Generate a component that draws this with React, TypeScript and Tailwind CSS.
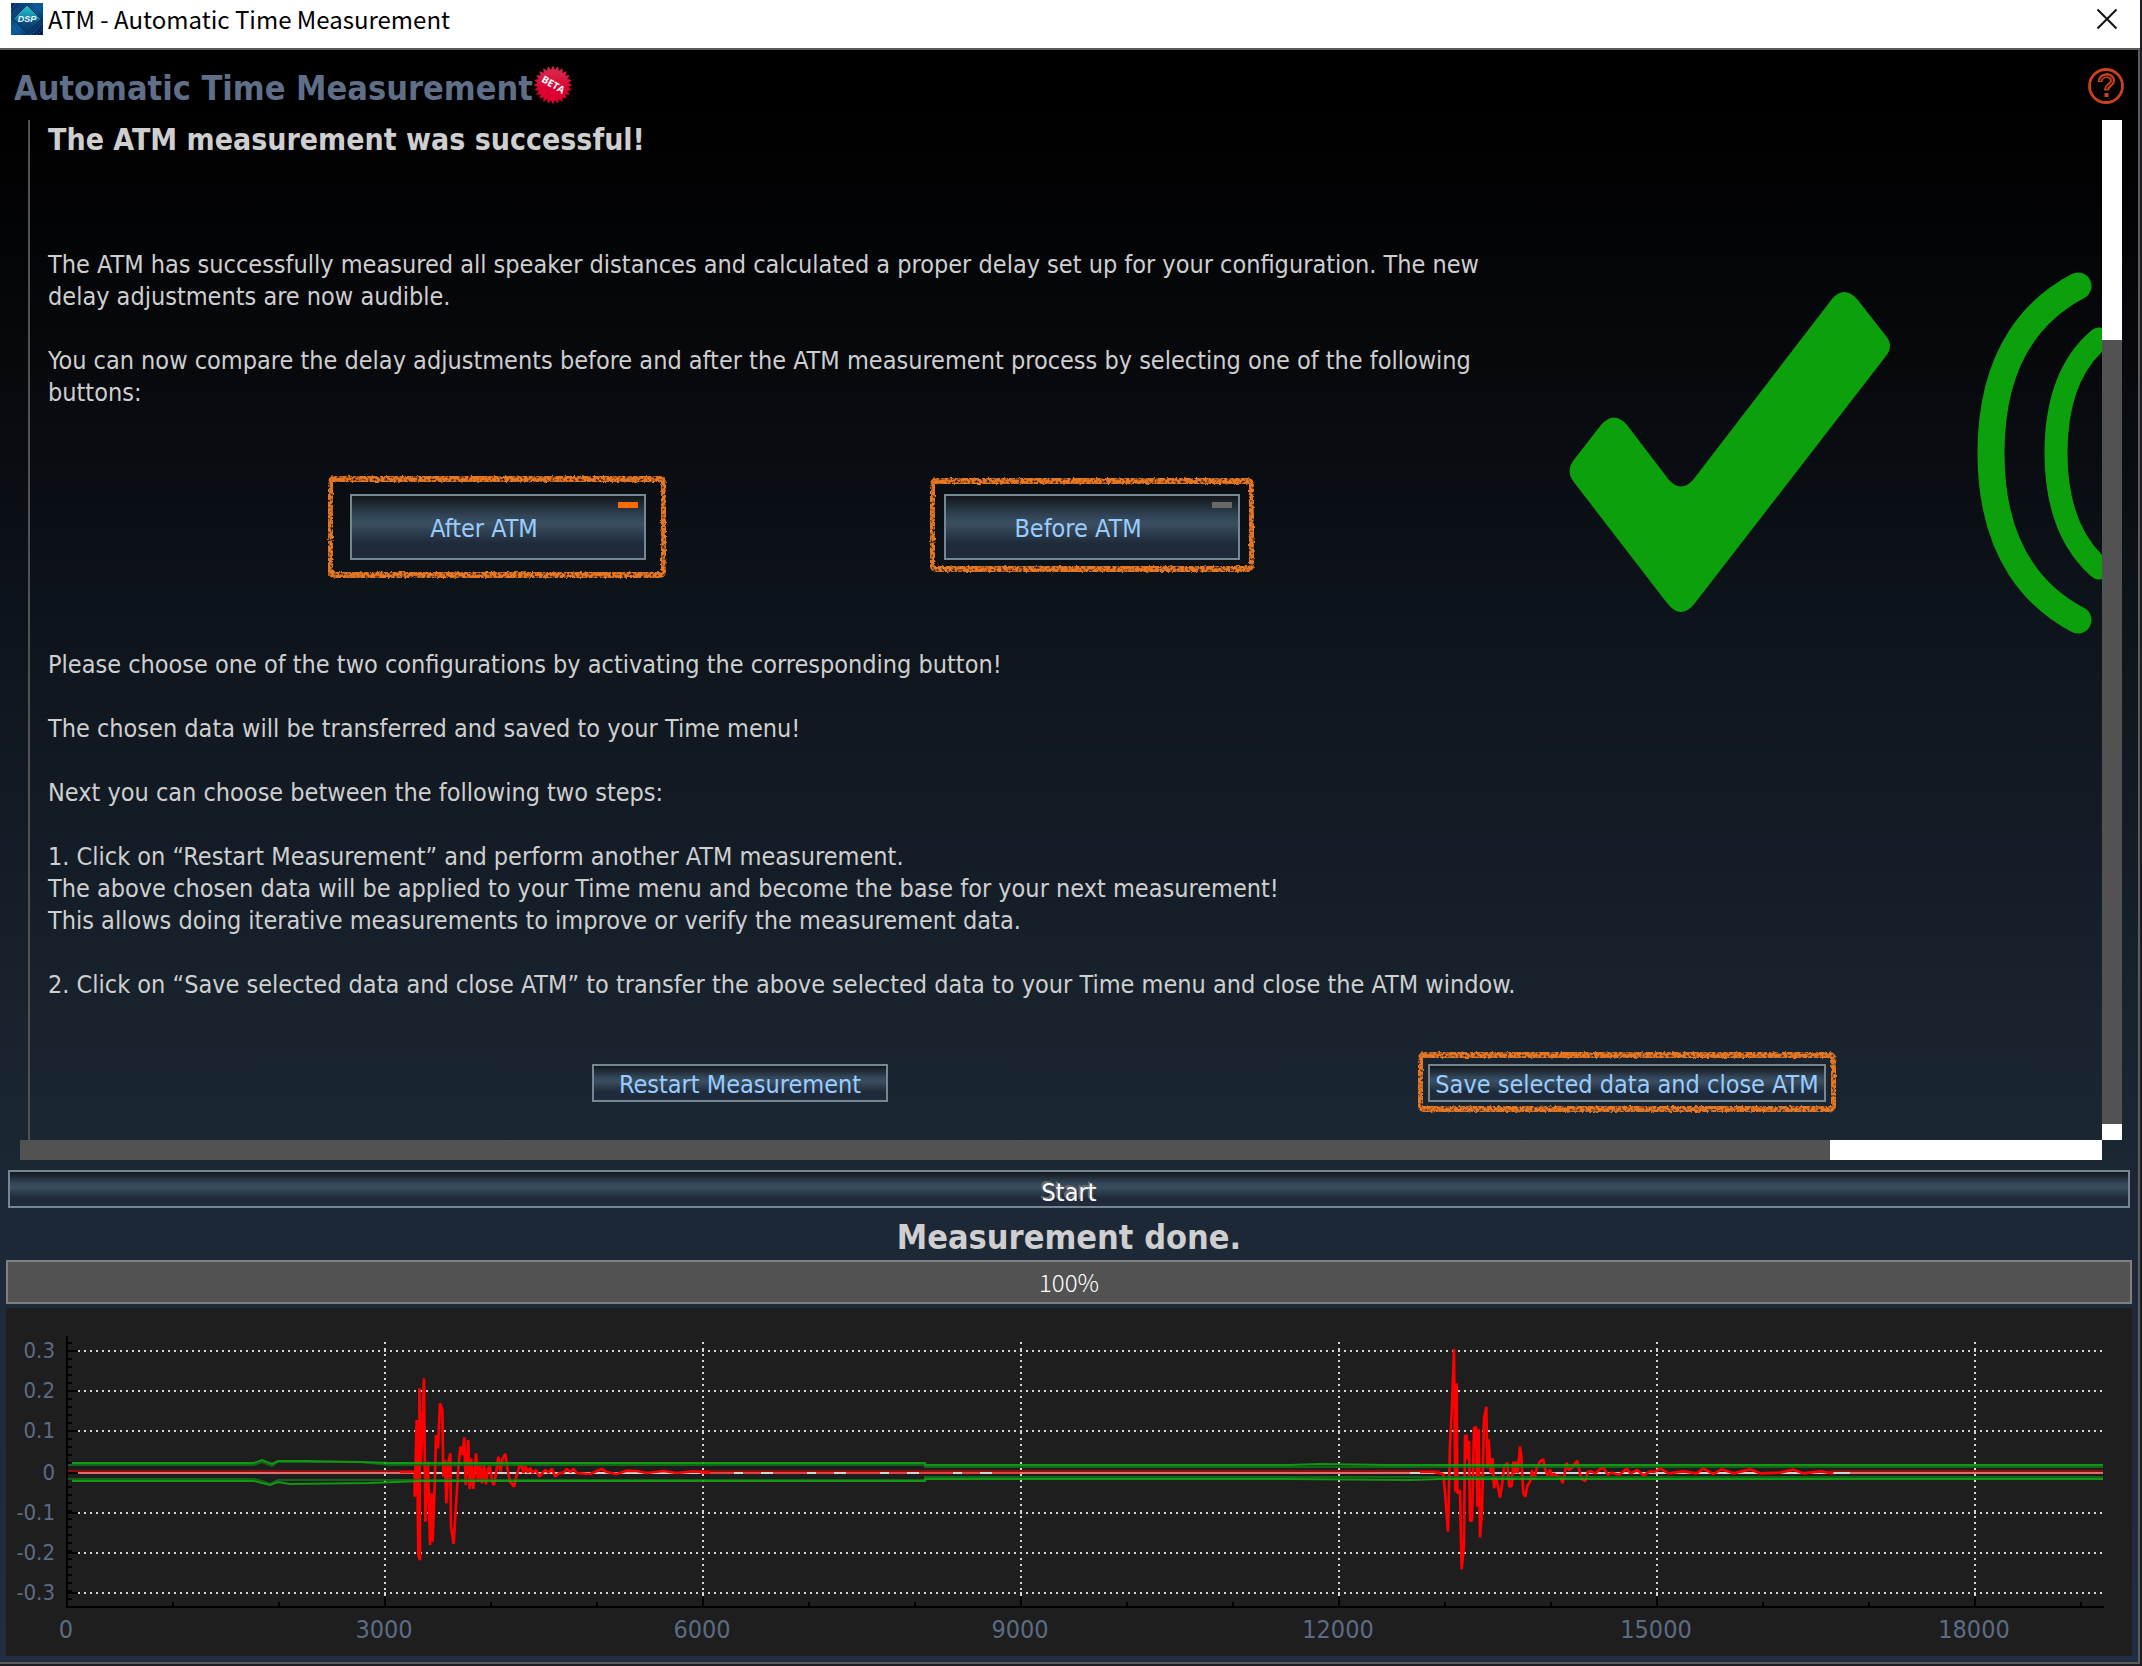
import type { ReactNode } from "react";

const FIRST_IMPULSE =
  "0,396 44,396 44,470 50,240 55,645 60,660 58,145 62,370 66,300 72,115 76,545 84,365 90,615 95,460 98,605 104,440 108,285 114,325 120,190 127,210 130,410 135,360 139,490 145,370 151,340 153,560 161,612 168,495 175,385 181,320 187,345 193,292 197,435 205,300 209,447 213,355 220,447 228,340 234,425 240,375 246,430 252,376 258,433 264,385 270,380 276,425 282,435 288,400 295,350 302,395 308,355 316,342 322,385 330,425 342,440 350,405 358,380 364,372 370,400 376,378 384,398 390,384 398,399 408,390 418,410 428,398 436,390 446,398 456,386 466,410 476,400 490,398 500,387 512,396 520,386 530,399 570,402 605,387 620,396 650,402 680,392 710,393 740,399 790,393 830,399 880,394 930,398";

const SECOND_IMPULSE =
  "0,426 40,426 70,432 76,500 84,605 90,345 96,225 102,57 106,485 110,160 112,490 120,480 125,718 132,645 135,320 140,315 143,388 147,332 150,572 156,572 162,295 168,290 172,530 176,298 180,622 186,545 192,265 199,230 202,415 206,328 212,430 218,385 222,475 228,440 233,465 240,503 246,465 252,412 262,398 268,470 275,468 280,395 284,430 288,395 293,430 300,350 304,380 310,490 316,500 322,468 330,455 336,420 342,450 350,415 360,395 370,388 376,420 384,438 390,418 396,440 402,430 412,440 420,440 428,460 434,430 440,398 446,420 455,415 465,400 472,393 480,430 486,448 496,453 504,425 515,424 525,430 548,412 556,422 564,434 575,428 598,434 620,416 632,430 652,420 670,436 690,424 702,426 722,416 745,430 790,424 830,430 850,416 880,432 905,418 940,430 990,418 1020,430 1080,428 1120,419 1150,430 1200,424 1240,430";

const X_TICKS = [0, 3000, 6000, 9000, 12000, 15000, 18000];
const Y_TICKS = [
  { label: "0.3", y: 1351 },
  { label: "0.2", y: 1391 },
  { label: "0.1", y: 1431 },
  { label: "0", y: 1473 },
  { label: "-0.1", y: 1513 },
  { label: "-0.2", y: 1553 },
  { label: "-0.3", y: 1593 },
];

const toX = (sample: number) => 67 + (sample * 318) / 3000;

function ImpulseChart() {
  return (
    <svg viewBox="6 1308 2126 348" className="block h-auto w-full bg-[#1e1e1e]" role="img" aria-label="Impulse response">
      {/* grid */}
      <g stroke="#d4d4d4" strokeWidth="2" shapeRendering="crispEdges">
        {Y_TICKS.filter((t) => t.label !== "0").map((t) => (
          <line key={t.label} x1="78" x2="2103" y1={t.y} y2={t.y} strokeDasharray="2 4" />
        ))}
        {X_TICKS.slice(1).map((v) => (
          <line key={v} x1={toX(v)} x2={toX(v)} y1="1342" y2="1596" strokeDasharray="2 4" />
        ))}
        <line x1="78" x2="2103" y1="1473" y2="1473" />
      </g>

      {/* axes and ticks */}
      <g stroke="#000" strokeWidth="2" shapeRendering="crispEdges">
        <line x1="67" x2="67" y1="1336" y2="1608" />
        <line x1="66" x2="2104" y1="1607" y2="1607" />
        {Y_TICKS.map((t) => (
          <line key={t.label} x1="67" x2="78" y1={t.y} y2={t.y} />
        ))}
        {Array.from({ length: 33 }, (_, i) => (
          <line key={i} x1="67" x2="72" y1={1343 + i * 8} y2={1343 + i * 8} />
        ))}
        {X_TICKS.slice(1).map((v) => (
          <line key={v} x1={toX(v)} x2={toX(v)} y1="1596" y2="1607" />
        ))}
        {Array.from({ length: 19 }, (_, i) => (
          <line key={i} x1={toX((i + 1) * 1000)} x2={toX((i + 1) * 1000)} y1="1602" y2="1607" />
        ))}
      </g>

      {/* quiet parts of the signal */}
      <g strokeWidth="2" shapeRendering="crispEdges">
        <path d="M68 1471H412M700 1471H1440M1830 1471H2103" stroke="#8a1010" />
        <path d="M78 1473H412M1020 1473H1410M1850 1473H2103" stroke="#e26c6c" />
        <path d="M700 1473H1020" stroke="#e04040" strokeDasharray="34 9 18 12" />
      </g>

      {/* impulses */}
      <g fill="none" stroke="#ff0000" strokeWidth="8" strokeLinejoin="bevel">
        <polyline points={FIRST_IMPULSE} transform="translate(400 1340) scale(0.33333)" />
        <polyline points={SECOND_IMPULSE} transform="translate(1420 1330) scale(0.33333)" />
      </g>

      {/* tolerance band */}
      <g fill="none" opacity="0.85">
        <path d="M68 1465H254L262 1462L272 1466L278 1462H360L390 1465H925V1467H2103" stroke="#14701a" strokeWidth="2" />
        <path d="M68 1479H254L262 1481L270 1484L278 1480H925V1477H2103" stroke="#14701a" strokeWidth="2" />
        <path d="M72 1463H254L262 1460L272 1464L278 1461L305 1461L360 1462L390 1463H925V1465H1290L1320 1464L1385 1465H2103" stroke="#0eae0e" strokeWidth="2" />
        <path d="M72 1481H254L262 1483L270 1485L278 1482L290 1484L370 1483L420 1481H925V1479H1290L1410 1480L1440 1479H2103" stroke="#0eae0e" strokeWidth="2" />
      </g>

      {/* axis labels */}
      <g fill="#5c6c83" fontFamily='"DejaVu Sans Condensed", "DejaVu Sans", sans-serif'>
        {Y_TICKS.map((t) => (
          <text key={t.label} x="55" y={t.y + 7} fontSize="22" textAnchor="end">
            {t.label}
          </text>
        ))}
        {X_TICKS.map((v) => (
          <text key={v} x={toX(v) - 1} y="1638" fontSize="25" textAnchor="middle">
            {v}
          </text>
        ))}
      </g>
    </svg>
  );
}

function DspIcon() {
  return (
    <svg viewBox="0 0 32 32" className="size-8" aria-hidden="true">
      <defs>
        <linearGradient id="dspBack" x1="0" y1="0" x2="1" y2="1">
          <stop offset="0" stopColor="#0a2a63" />
          <stop offset=".5" stopColor="#0b5c9a" />
          <stop offset="1" stopColor="#06173f" />
        </linearGradient>
        <linearGradient id="dspGem" x1="0" y1="0" x2="0" y2="1">
          <stop offset="0" stopColor="#27c3cf" />
          <stop offset=".45" stopColor="#1588a8" />
          <stop offset=".6" stopColor="#0b4f7c" />
          <stop offset="1" stopColor="#0a3565" />
        </linearGradient>
      </defs>
      <rect width="32" height="32" fill="url(#dspBack)" />
      <path d="M0 6L6 0M0 12L12 0M20 32L32 20M26 32L32 26M0 22L10 32M22 0L32 10" stroke="#1f7fc4" strokeDasharray="1 2" />
      <path d="M16 2L30 16L16 30L2 16Z" fill="url(#dspGem)" stroke="#0a2f55" strokeWidth="1" />
      <text x="16" y="19" fontSize="9" fontWeight="bold" fontStyle="italic" textAnchor="middle" fill="#e8f6ff" fontFamily='"Liberation Sans", sans-serif'>
        DSP
      </text>
    </svg>
  );
}

function BetaBadge() {
  const spikes = 24;
  const points = Array.from({ length: spikes * 2 }, (_, i) => {
    const r = i % 2 ? 15.5 : 19.5;
    const a = (i * Math.PI) / spikes;
    return `${20 + r * Math.sin(a)},${20 - r * Math.cos(a)}`;
  }).join(" ");
  return (
    <svg viewBox="0 0 40 40" className="size-10" role="img" aria-label="Beta">
      <defs>
        <linearGradient id="betaFill" x1="0" y1="0" x2="0" y2="1">
          <stop offset=".2" stopColor="#d92348" />
          <stop offset=".6" stopColor="#dc0030" />
        </linearGradient>
      </defs>
      <polygon points={points} fill="url(#betaFill)" />
      <text x="20" y="23" fontSize="10" fontWeight="bold" textAnchor="middle" fill="#fff" transform="rotate(30 20 20)" fontFamily='"Open Sans", sans-serif'>
        BETA
      </text>
    </svg>
  );
}

function HelpIcon() {
  return (
    <svg viewBox="0 0 36 36" className="size-9" aria-hidden="true" fill="none">
      <circle cx="18" cy="18" r="16.5" stroke="#c9421f" strokeWidth="2.8" />
      <path d="M12 14C12 5.500 24.500 6 24.500 12.500C24.500 17 18.500 17 18.500 22.500" stroke="#c9421f" strokeWidth="5" />
      <path d="M12 13C13.500 6.500 24.500 6.500 24.500 12.500C24.500 17 18.500 17 18.500 21" stroke="#3a1006" strokeWidth="1.200" />
      <rect x="16.500" y="25" width="4" height="4" fill="#c9421f" />
    </svg>
  );
}

function SuccessDrawing() {
  return (
    <svg viewBox="1562 265 540 375" className="mt-4 w-[540px] shrink-0 self-start" role="img" aria-label="Measurement successful">
      <path
        fill="#0ca00c"
        d="M1832 299Q1844 285 1857 299L1886 336Q1894 346 1886 356L1695 603Q1681 621 1667 603L1573 481Q1566 471 1573 461L1601 425Q1614 410 1627 425L1669 480Q1681 493 1693 480Z"
      />
      <g fill="none" stroke="#0ca00c" strokeLinecap="round">
        <path strokeWidth="27" d="M2078 286C2040 306 1991 350 1991 453S2040 600 2078 620" />
        <path strokeWidth="23" d="M2099 339C2072 362 2056 400 2056 453S2072 544 2099 568" />
      </g>
    </svg>
  );
}

/* Hand-drawn orange outline that surrounds a control */
function Marker({ className }: { className: string }) {
  return (
    <span
      aria-hidden="true"
      className={`pointer-events-none absolute rounded-md border-x-[5px] border-y-[6px] border-[#e87722] [filter:url(#chalk)] ${className}`}
    />
  );
}

const BUTTON =
  "flex items-center justify-center whitespace-nowrap border-2 border-[#758790] bg-[linear-gradient(180deg,#13171b_0%,#33475a_34%,#3a4e60_45%,#1f2b3b_76%,#1f2b3b_100%)] text-[25px] leading-8";

function ToggleButton({ children, active, marker }: { children: ReactNode; active: boolean; marker: string }) {
  return (
    <div className="relative">
      <button type="button" aria-pressed={active} className={`${BUTTON} relative h-[66px] w-[296px] pt-1 pr-7 text-[#99ccff]`}>
        {children}
        <span className={`absolute top-[6px] right-[6px] h-[6px] w-5 ${active ? "bg-[#ff6a00]" : "bg-[#686868]"}`} />
      </button>
      <Marker className={marker} />
    </div>
  );
}

export default function App() {
  return (
    <div className="flex min-h-screen flex-col bg-[#1d1c22] pr-[2px] pb-[2px] font-['DejaVu_Sans_Condensed','DejaVu_Sans',sans-serif] text-[#cfcfcf]">
      <svg width="0" height="0" className="absolute" aria-hidden="true">
        <filter id="chalk" x="-5%" y="-10%" width="110%" height="120%">
          <feTurbulence type="fractalNoise" baseFrequency="0.35" numOctaves="2" seed="4" result="noise" />
          <feDisplacementMap in="SourceGraphic" in2="noise" scale="3" xChannelSelector="R" yChannelSelector="G" result="rough" />
          <feColorMatrix in="noise" type="matrix" values="0 0 0 0 0  0 0 0 0 0  0 0 0 0 0  0 0 3 0 -0.5" result="grain" />
          <feComposite in="rough" in2="grain" operator="in" />
        </filter>
      </svg>

      <header className="flex h-12 shrink-0 items-start bg-white pt-[3px] pl-[11px] text-black">
        <DspIcon />
        <span className="ml-[5px] font-['Noto_Sans_CJK_KR',sans-serif] text-[24px] leading-8">ATM - Automatic Time Measurement</span>
        <button type="button" aria-label="Close" className="mt-[5px] mr-[22px] ml-auto">
          <svg viewBox="0 0 22 22" className="size-[22px]" stroke="#111" strokeWidth="2">
            <path d="M1.500 1.500L20.500 20.500M20.500 1.500L1.500 20.500" />
          </svg>
        </button>
      </header>

      <main className="flex flex-1 flex-col border-t-2 border-r-2 border-b-2 border-[#5c5c5c] bg-[linear-gradient(180deg,#000_0%,#000_4%,#07090d_20%,#0d131a_34%,#18232e_60%,#1e2a39_78%,#212d40_100%)] pb-[6px]">
        <div className="flex h-[70px] items-start pt-[15px] pl-[14px]">
          <h1 className="mt-[3px] text-[34px] leading-10 font-bold text-[#5f6f88]">Automatic Time Measurement</h1>
          <BetaBadge />
          <button type="button" aria-label="Help" className="mt-[3px] mr-[14px] ml-auto">
            <HelpIcon />
          </button>
        </div>

        <div className="mr-4 ml-5 flex flex-1">
          <section className="ml-2 flex-1 border-l-2 border-[#525252] pt-[2px] pb-[38px] pl-[18px] text-[25px] leading-8">
            <h2 className="text-[30px] leading-9 font-bold">The ATM measurement was successful!</h2>

            <div className="mt-[91px] flex">
              <div className="flex-1">
                <p>
                  The ATM has successfully measured all speaker distances and calculated a proper delay set up for your configuration. The new
                  <br />
                  delay adjustments are now audible.
                </p>
                <p className="mt-8">
                  You can now compare the delay adjustments before and after the ATM measurement process by selecting one of the following
                  <br />
                  buttons:
                </p>
                <div className="mt-[85px] flex gap-[298px] pl-[302px]">
                  <ToggleButton active marker="-top-[18px] -right-5 -bottom-[18px] -left-[22px]">
                    After ATM
                  </ToggleButton>
                  <ToggleButton active={false} marker="-top-4 -right-[14px] -bottom-3 -left-[14px]">
                    Before ATM
                  </ToggleButton>
                </div>
                <p className="mt-[89px]">Please choose one of the two configurations by activating the corresponding button!</p>
              </div>
              <SuccessDrawing />
            </div>

            <p className="mt-8">The chosen data will be transferred and saved to your Time menu!</p>
            <p className="mt-8">Next you can choose between the following two steps:</p>
            <p className="mt-8">
              1. Click on “Restart Measurement” and perform another ATM measurement.
              <br />
              The above chosen data will be applied to your Time menu and become the base for your next measurement!
              <br />
              This allows doing iterative measurements to improve or verify the measurement data.
            </p>
            <p className="mt-8">
              2. Click on “Save selected data and close ATM” to transfer the above selected data to your Time menu and close the ATM window.
            </p>

            <div className="mt-[63px] flex gap-[540px] pl-[544px]">
              <button type="button" className={`${BUTTON} h-[38px] w-[296px] pt-1 text-[#99ccff]`}>
                Restart Measurement
              </button>
              <div className="relative">
                <button type="button" className={`${BUTTON} h-[38px] w-[398px] pt-1 text-[#99ccff]`}>
                  Save selected data and close ATM
                </button>
                <Marker className="-top-3 -right-[10px] -bottom-[10px] -left-[10px]" />
              </div>
            </div>
          </section>

          <div className="flex w-5 flex-col bg-[#525252]">
            <div className="h-[220px] bg-white" />
            <div className="mt-auto h-4 bg-white" />
          </div>
        </div>

        <div className="mr-9 ml-5 flex h-5 justify-end bg-[#525252]">
          <div className="w-[272px] bg-white" />
        </div>

        <button type="button" className={`${BUTTON} mx-2 mt-[10px] h-[38px] pt-2 text-white [text-shadow:-2px_-2px_0_#6a6a6a]`}>
          Start
        </button>

        <h2 className="mt-[9px] mb-[3px] text-center text-[34px] leading-10 font-bold">Measurement done.</h2>

        <div className="mr-[6px] ml-[6px] flex flex-col gap-1">
          <div
            role="progressbar"
            aria-label="Measurement progress"
            aria-valuenow={100}
            className="flex h-11 items-center justify-center border-2 border-[#807f83] bg-[#525252] font-['Noto_Sans_CJK_KR',sans-serif] text-[24px] leading-8 font-light text-white"
          >
            100%
          </div>
          <ImpulseChart />
        </div>
      </main>
    </div>
  );
}
